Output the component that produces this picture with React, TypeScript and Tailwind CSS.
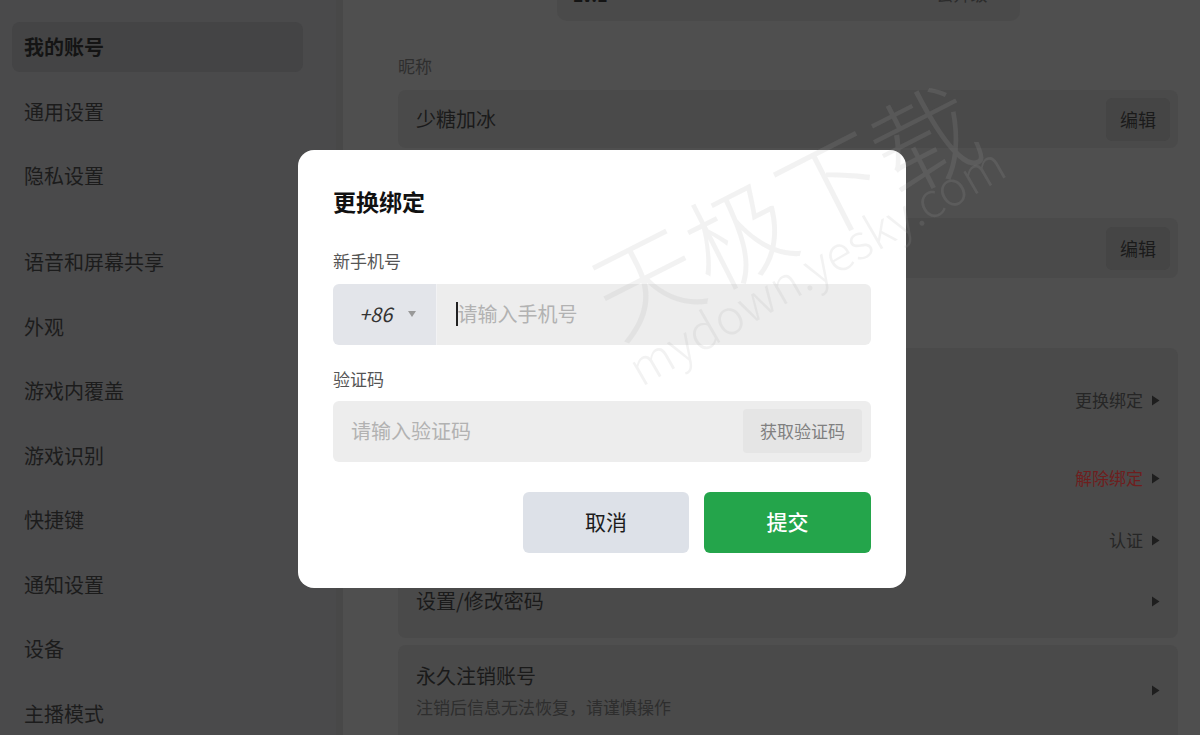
import { ChevronDown } from "lucide-react";

const sideItems = [
  "我的账号",
  "通用设置",
  "隐私设置",
  "语音和屏幕共享",
  "外观",
  "游戏内覆盖",
  "游戏识别",
  "快捷键",
  "通知设置",
  "设备",
  "主播模式",
];

function Arrow() {
  return (
    <svg width="9" height="11" viewBox="0 0 9 11" className="ml-[8px] shrink-0">
      <path d="M1 0.5 L8.5 5.5 L1 10.5 Z" fill="#1e1e1e" />
    </svg>
  );
}

function Sidebar() {
  return (
    <aside className="w-[343px] shrink-0 bg-[#4a4a4b] border-r-[7px] border-[#484848] pt-[22px] pl-[12px] pr-[33px]">
      <div className="flex flex-col gap-[14.5px]">
        {sideItems.map((label, i) => (
          <div
            key={label}
            className={
              "h-[50px] flex items-center px-[12px] rounded-[8px] text-[20px] " +
              (i === 0 ? "bg-[#444445] font-bold text-[#141414] " : "text-[#1c1c1c] ") +
              (i === 3 ? "mt-[21.5px]" : "")
            }
          >
            {label}
          </div>
        ))}
      </div>
    </aside>
  );
}

function EditButton() {
  return (
    <button className="h-[43px] w-[64px] rounded-[6px] bg-[#454545] text-[18px] text-[#1a1a1a]">
      编辑
    </button>
  );
}

function Main() {
  return (
    <main className="flex-1 bg-[#4f4f4f] pl-[55px] pr-[22px]">
      <div className="mx-auto -mt-[40px] h-[61px] w-[463px] rounded-[10px] bg-[#4a4a4a] px-[16px] pt-[22px] flex items-start justify-between">
        <span className="text-[18px] font-bold text-[#141414] leading-6">Lv.1</span>
        <span className="flex items-center text-[17px] text-[#2c2c2c] leading-6">
          去升级
          <ChevronDown size={14} className="ml-[2px]" />
        </span>
      </div>

      <div className="mt-[33px] text-[17px] leading-6 text-[#2e2e2e]">昵称</div>
      <div className="mt-[12px] h-[58px] rounded-[8px] bg-[#4a4a4a] pl-[18px] pr-[8px] flex items-center justify-between">
        <span className="text-[20px] text-[#1a1a1a]">少糖加冰</span>
        <EditButton />
      </div>

      {/* label and value of this row sit under the dialog */}
      <div className="mt-[70px] h-[60px] rounded-[8px] bg-[#4a4a4a] pl-[18px] pr-[8px] flex items-center justify-end">
        <EditButton />
      </div>

      <div className="mt-[70px] rounded-[8px] bg-[#4a4a4a] pl-[18px] pr-[18px] pb-[12px]">
        <div className="h-[104px] flex items-center justify-end">
          <span className="flex items-center text-[17px] text-[#262626]">
            更换绑定
            <Arrow />
          </span>
        </div>
        <div className="h-[52px] flex items-center justify-end">
          <span className="flex items-center text-[17px] text-[#6e1e1e]">
            解除绑定
            <Arrow />
          </span>
        </div>
        <div className="h-[72px] flex items-center justify-end">
          <span className="flex items-center text-[17px] text-[#262626]">
            认证
            <Arrow />
          </span>
        </div>
        <div className="h-[50px] flex items-center justify-between">
          <span className="text-[20px] text-[#1a1a1a]">设置/修改密码</span>
          <Arrow />
        </div>
      </div>

      <div className="mt-[7px] h-[100px] rounded-[8px] bg-[#4a4a4a] pl-[18px] pr-[18px] pt-[16px] flex items-start justify-between">
        <div className="flex flex-col">
          <span className="text-[20px] leading-[30px] text-[#1a1a1a]">永久注销账号</span>
          <span className="mt-[4px] text-[17px] leading-[24px] text-[#2e2e2e]">
            注销后信息无法恢复，请谨慎操作
          </span>
        </div>
        <div className="mt-[24px]">
          <Arrow />
        </div>
      </div>
    </main>
  );
}

function Modal() {
  return (
    <div className="fixed inset-0 flex items-center justify-center pl-[4px] pt-[2px]">
      <div className="w-[608px] rounded-[16px] bg-white px-[35px] pt-[36px] pb-[35px]">
        <div className="text-[23px] leading-[30px] font-bold text-[#111]">更换绑定</div>

        <div className="mt-[33px] text-[17px] leading-6 text-[#555]">新手机号</div>
        <div className="mt-[11px] h-[61px] flex rounded-[6px] overflow-hidden">
          <div className="w-[104px] bg-[#e3e5ea] flex items-center pl-[26px] border-r border-[#f2f2f4]">
            <span className="italic text-[20px] text-[#333]">+86</span>
            <svg width="8" height="6" viewBox="0 0 8 6" className="ml-[16px]">
              <path d="M0 0 H8 L4 6 Z" fill="#999" />
            </svg>
          </div>
          <div className="flex-1 bg-[#ededed] flex items-center pl-[19px]">
            <span className="w-[1.5px] h-[24px] bg-[#222]" />
            <span className="text-[20px] text-[#b2b2b2]">请输入手机号</span>
          </div>
        </div>

        <div className="mt-[22px] text-[17px] leading-6 text-[#555]">验证码</div>
        <div className="mt-[10px] h-[61px] flex items-center justify-between rounded-[6px] bg-[#ededed] pl-[18px] pr-[9px]">
          <span className="text-[20px] text-[#b2b2b2]">请输入验证码</span>
          <button className="h-[44px] w-[119px] rounded-[4px] bg-[#e5e5e5] text-[17px] text-[#808080]">
            获取验证码
          </button>
        </div>

        <div className="mt-[30px] flex justify-end gap-[15px]">
          <button className="h-[61px] w-[166px] rounded-[6px] bg-[#dde1e8] text-[21px] text-[#1c1c1c]">
            取消
          </button>
          <button className="h-[61px] w-[167px] rounded-[6px] bg-[#24a54b] text-[21px] font-medium text-white">
            提交
          </button>
        </div>
      </div>
    </div>
  );
}

function Watermark() {
  return (
    <div className="fixed inset-0 pointer-events-none overflow-hidden">
      <span className="absolute left-[783px] top-[206px] -translate-x-1/2 -translate-y-1/2 -rotate-27 whitespace-nowrap text-[104px] font-light leading-none text-[#aaaaaa]/15">
        天极下载
      </span>
      <span className="absolute left-[815px] top-[263px] -translate-x-1/2 -translate-y-1/2 -rotate-30 whitespace-nowrap text-[48px] font-light leading-none text-[#aaaaaa]/15">
        mydown.yesky.com
      </span>
    </div>
  );
}

export default function App() {
  return (
    <div
      className="relative flex h-[735px] w-[1200px] overflow-hidden"
      style={{ fontFamily: '"Noto Sans CJK SC", "Noto Sans", sans-serif' }}
    >
      <Sidebar />
      <Main />
      <Modal />
      <Watermark />
    </div>
  );
}
